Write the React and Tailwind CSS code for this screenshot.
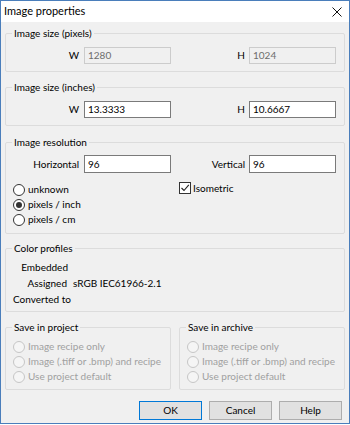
import React from 'react'

const font = { fontFamily: '"Lato", "Liberation Sans", sans-serif' }

function GroupBox({ title, className = '', children }) {
  return (
    <fieldset className={`border border-[#dcdcdc] rounded-[2px] px-0 mx-0 ${className}`}>
      <legend className="ml-[6px] px-[2px] text-[10px] leading-[12px] text-black">{title}</legend>
      {children}
    </fieldset>
  )
}

function Field({ value, disabled }) {
  return (
    <div
      className={`w-[87px] h-[17px] border flex items-center pl-[3px] text-[10px] ${
        disabled ? 'border-[#cccccc] bg-[#f0f0f0] text-[#6d6d6d]' : 'border-[#7a7a7a] bg-white text-black'
      }`}
    >
      {value}
    </div>
  )
}

function Radio({ label, checked, disabled }) {
  return (
    <div className="h-[15px] flex items-center pl-[7px]">
      <span
        className={`w-[12px] h-[12px] rounded-full border flex items-center justify-center ${
          disabled ? 'border-[#c6c6c6] bg-[#f5f5f5]' : 'border-[#333333] bg-white'
        }`}
      >
        {checked && <span className="w-[6px] h-[6px] rounded-full bg-[#333333]" />}
      </span>
      <span className={`ml-[3px] text-[10px] ${disabled ? 'text-[#a0a0a0]' : 'text-black'}`}>{label}</span>
    </div>
  )
}

function SizeRow({ w, h, disabled }) {
  return (
    <div className="flex items-center text-[10px]">
      <span className="w-[78px] text-right pr-[5px]">W</span>
      <Field value={w} disabled={disabled} />
      <span className="w-[78px] text-right pr-[4px]">H</span>
      <Field value={h} disabled={disabled} />
    </div>
  )
}

export default function App() {
  return (
    <div className="bg-white w-[350px] h-[425px]" style={font}>
      <div className="w-[350px] h-[424px] border border-[#4a7ebb] bg-[#f0f0f0] flex flex-col">
        <div className="h-[21px] bg-white flex items-center justify-between pl-[3px] pr-[7px]">
          <span className="text-[11px] text-black">Image properties</span>
          <svg width="10" height="10" viewBox="0 0 10 10">
            <path d="M0.5 0.5 L9.5 9.5 M9.5 0.5 L0.5 9.5" stroke="#111" strokeWidth="1" />
          </svg>
        </div>

        <div className="flex flex-col px-[4px] pt-[5px]">
          <GroupBox title="Image size (pixels)" className="pt-[8px] pb-[7px]">
            <SizeRow w="1280" h="1024" disabled />
          </GroupBox>

          <GroupBox title="Image size (inches)" className="mt-[9px] pt-[8px] pb-[7px]">
            <SizeRow w="13.3333" h="10.6667" />
          </GroupBox>

          <GroupBox title="Image resolution" className="mt-[10px] pt-[7px] pb-[6px]">
            <div className="flex text-[10px]">
              <div className="w-[165px]">
                <div className="flex items-center h-[18px]">
                  <span className="w-[78px] text-right pr-[5px]">Horizontal</span>
                  <div className="w-[87px] h-[18px] border border-[#7a7a7a] bg-white flex items-center pl-[3px]">96</div>
                </div>
                <div className="mt-[9px]">
                  <Radio label="unknown" />
                  <Radio label="pixels / inch" checked />
                  <Radio label="pixels / cm" />
                </div>
              </div>
              <div className="w-[165px]">
                <div className="flex items-center h-[18px]">
                  <span className="w-[78px] text-right pr-[4px]">Vertical</span>
                  <div className="w-[87px] h-[18px] border border-[#7a7a7a] bg-white flex items-center pl-[3px]">96</div>
                </div>
                <div className="mt-[9px] h-[12px] flex items-center pl-[8px]">
                  <span className="w-[12px] h-[12px] border border-[#333333] bg-white flex items-center justify-center">
                    <svg width="10" height="10" viewBox="0 0 10 10">
                      <path d="M1.5 5 L4 7.5 L8.8 1.8" fill="none" stroke="#222" strokeWidth="1.1" />
                    </svg>
                  </span>
                  <span className="ml-[2px]">Isometric</span>
                </div>
              </div>
            </div>
          </GroupBox>

          <GroupBox title="Color profiles" className="mt-[8px] pt-[5px] pb-[4px]">
            <div className="text-[10px] text-black">
              <div className="h-[16px] flex items-center">
                <span className="w-[62px] text-right">Embedded</span>
              </div>
              <div className="h-[16px] flex items-center">
                <span className="w-[61px] text-right">Assigned</span>
                <span className="ml-[6px]">sRGB IEC61966-2.1</span>
              </div>
              <div className="h-[16px] flex items-center pl-[7px]">Converted to</div>
            </div>
          </GroupBox>

          <div className="mt-[9px] grid grid-cols-2 gap-[8px]">
            <GroupBox title="Save in project" className="pt-[6px] pb-[5px]">
              <Radio label="Image recipe only" disabled />
              <Radio label="Image (.tiff or .bmp) and recipe" disabled />
              <Radio label="Use project default" disabled />
            </GroupBox>
            <GroupBox title="Save in archive" className="pt-[6px] pb-[5px]">
              <Radio label="Image recipe only" disabled />
              <Radio label="Image (.tiff or .bmp) and recipe" disabled />
              <Radio label="Use project default" disabled />
            </GroupBox>
          </div>

          <div className="mt-[11px] flex justify-end gap-[7px] pr-[3px]">
            <button className="w-[63px] h-[19px] border border-[#0078d7] bg-[#e1e1e1] text-[10px] text-black">OK</button>
            <button className="w-[63px] h-[19px] border border-[#adadad] bg-[#e1e1e1] text-[10px] text-black">Cancel</button>
            <button className="w-[63px] h-[19px] border border-[#adadad] bg-[#e1e1e1] text-[10px] text-black">Help</button>
          </div>
        </div>
      </div>
    </div>
  )
}
